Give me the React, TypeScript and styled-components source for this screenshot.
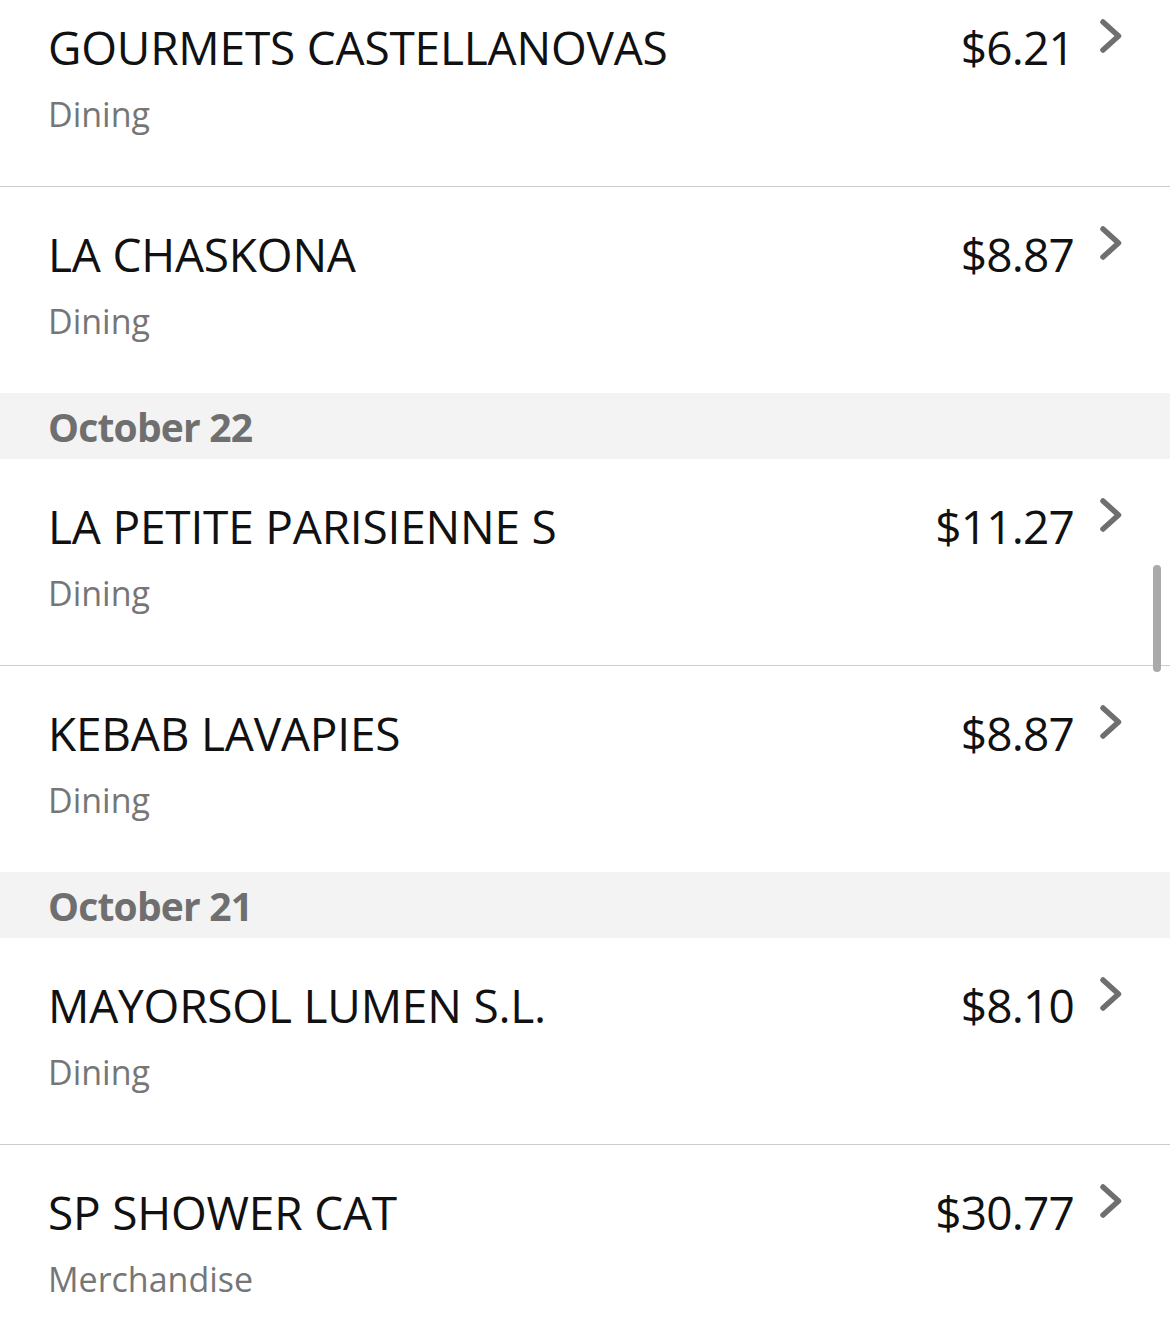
import styled, { createGlobalStyle } from "styled-components";

const GlobalStyle = createGlobalStyle`
  html, body {
    margin: 0;
    padding: 0;
    background: #ffffff;
  }
  body {
    font-family: "Open Sans", "Noto Sans", sans-serif;
    -webkit-font-smoothing: antialiased;
  }
`;

interface Transaction {
  merchant: string;
  category: string;
  amount: string;
}

interface Section {
  date?: string;
  items: Transaction[];
}

const sections: Section[] = [
  {
    items: [
      { merchant: "GOURMETS CASTELLANOVAS", category: "Dining", amount: "$6.21" },
      { merchant: "LA CHASKONA", category: "Dining", amount: "$8.87" },
    ],
  },
  {
    date: "October 22",
    items: [
      { merchant: "LA PETITE PARISIENNE S", category: "Dining", amount: "$11.27" },
      { merchant: "KEBAB LAVAPIES", category: "Dining", amount: "$8.87" },
    ],
  },
  {
    date: "October 21",
    items: [
      { merchant: "MAYORSOL LUMEN S.L.", category: "Dining", amount: "$8.10" },
      { merchant: "SP SHOWER CAT", category: "Merchandise", amount: "$30.77" },
    ],
  },
];

const Screen = styled.div`
  position: relative;
  width: 1170px;
  height: 1338px;
  overflow: hidden;
  background: #ffffff;
`;

const List = styled.div`
  display: flex;
  flex-direction: column;
  margin-top: -20px;
`;

const DateHeader = styled.div`
  height: 66px;
  display: flex;
  align-items: center;
  padding-left: 48px;
  background: #f3f3f3;
  color: #6f6f6f;
  font-size: 39px;
  font-weight: 700;
  letter-spacing: -0.8px;
`;

const Row = styled.div<{ $divided: boolean }>`
  display: flex;
  flex-direction: column;
  box-sizing: border-box;
  height: ${(props) => (props.$divided ? "207px" : "206px")};
  padding: 39px 48px 0 48px;
  border-bottom: ${(props) => (props.$divided ? "1px solid #cccccc" : "none")};
`;

const TopLine = styled.div`
  display: flex;
  align-items: flex-start;
  height: 56px;
`;

const Merchant = styled.div`
  flex: 1;
  font-size: 46px;
  line-height: 56px;
  color: #111111;
  letter-spacing: -0.2px;
  white-space: nowrap;
`;

const Amount = styled.div`
  font-size: 46px;
  line-height: 56px;
  color: #111111;
  letter-spacing: -0.8px;
`;

const Chevron = styled.svg`
  display: block;
  width: 22px;
  height: 34px;
  margin-left: 26px;
  flex-shrink: 0;
`;

const Category = styled.div`
  margin-top: 18px;
  font-size: 34px;
  line-height: 42px;
  color: #767676;
`;

const ScrollThumb = styled.div`
  position: absolute;
  left: 1153px;
  top: 565px;
  width: 8px;
  height: 107px;
  border-radius: 4px;
  background: #aaaaaa;
`;

const TransactionRow = ({
  merchant,
  category,
  amount,
  divided,
}: Transaction & { divided: boolean }) => (
  <Row $divided={divided}>
    <TopLine>
      <Merchant>{merchant}</Merchant>
      <Amount>{amount}</Amount>
      <Chevron viewBox="0 0 22 34">
        <path
          d="M3 3 L18.5 17 L3 31"
          fill="none"
          stroke="#6f6f6f"
          strokeWidth="5.5"
          strokeLinecap="round"
          strokeLinejoin="round"
        />
      </Chevron>
    </TopLine>
    <Category>{category}</Category>
  </Row>
);

export default function App() {
  return (
    <>
      <GlobalStyle />
      <Screen>
        <List>
          {sections.map((section, si) => (
            <div key={si}>
              {section.date && <DateHeader>{section.date}</DateHeader>}
              {section.items.map((item, i) => (
                <TransactionRow
                  key={item.merchant}
                  {...item}
                  divided={i < section.items.length - 1}
                />
              ))}
            </div>
          ))}
        </List>
        <ScrollThumb />
      </Screen>
    </>
  );
}
